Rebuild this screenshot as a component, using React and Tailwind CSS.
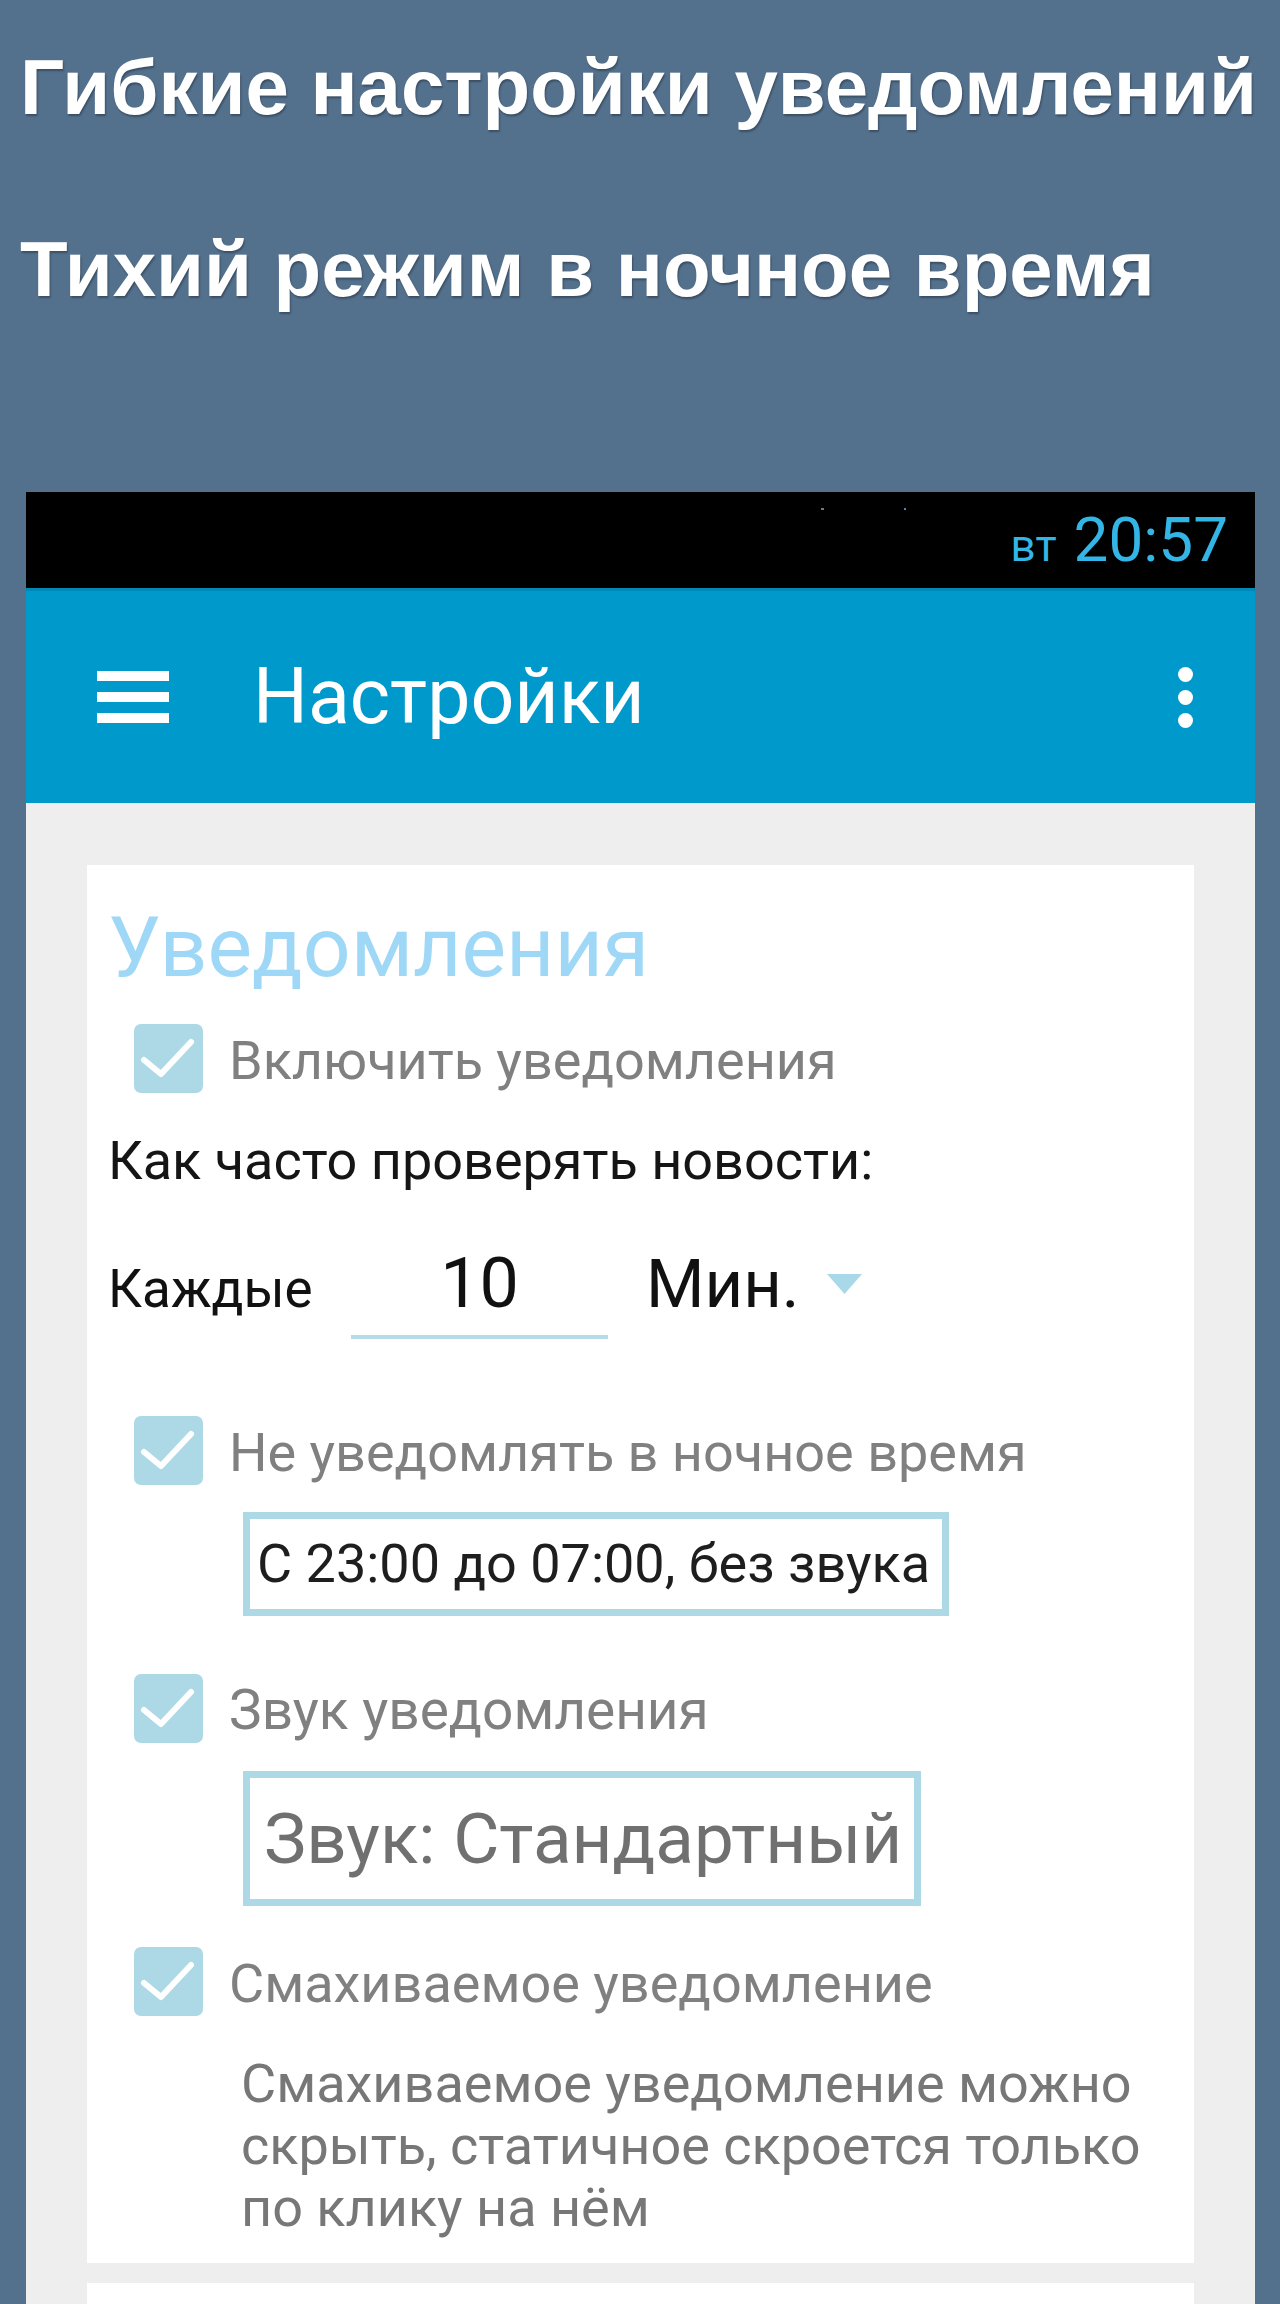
import React from "react";

const Check = () => (
  <div className="w-[69px] h-[69px] rounded-[7px] bg-[#add8e6] shrink-0">
    <svg width="69" height="69" viewBox="0 0 69 69">
      <path d="M10 36 L27 50 L57 18" fill="none" stroke="white" strokeWidth="6" strokeLinecap="round" strokeLinejoin="round" />
    </svg>
  </div>
);

const CheckRow = ({ label, className, textClass = "text-[54px]" }) => (
  <div className={"flex items-center h-[69px] ml-[29px] " + className}>
    <Check />
    <span className={"ml-[26px] pt-[4px] leading-none text-[#808080] whitespace-nowrap " + textClass}>{label}</span>
  </div>
);

export default function App() {
  return (
    <div className="w-[1280px] h-[2304px] bg-[#53708d] overflow-hidden flex flex-col font-['Roboto',sans-serif]">
      <div className="pl-[20px] font-['Liberation_Sans',Arial,sans-serif] font-bold text-white text-[78px] leading-none whitespace-nowrap [text-shadow:1px_2px_2px_rgba(0,0,0,0.3)]">
        <div className="mt-[48px] h-[78px]">Гибкие настройки уведомлений</div>
        <div className="mt-[104px] h-[78px]">Тихий режим в ночное время</div>
      </div>

      <div className="mt-[184px] ml-[26px] w-[1229px] flex-1 flex flex-col bg-[#eeeeee]">
        <div className="relative h-[96px] bg-black flex items-center justify-end pr-[27px] text-[#33b5e5]">
          <span className="absolute left-[795px] top-[16px] w-[3px] h-[2px] bg-[#777]"></span>
          <span className="absolute left-[878px] top-[16px] w-[2px] h-[2px] bg-[#3a8fb5]"></span>
          <div className="flex items-baseline leading-none">
            <span className="text-[44px] mr-[17px]">вт</span>
            <span className="text-[62px]">20:57</span>
          </div>
        </div>

        <div className="h-[215px] bg-[#0099cc] border-t-[3px] border-[#0089b8] flex items-center pl-[71px] pr-[62px]">
          <div className="w-[72px] flex flex-col gap-[11px]">
            <div className="h-[10px] bg-white"></div>
            <div className="h-[10px] bg-white"></div>
            <div className="h-[10px] bg-white"></div>
          </div>
          <div className="ml-[84px] text-white text-[77px] leading-none">Настройки</div>
          <div className="ml-auto flex flex-col gap-[8px]">
            <div className="w-[15px] h-[15px] rounded-full bg-white"></div>
            <div className="w-[15px] h-[15px] rounded-full bg-white"></div>
            <div className="w-[15px] h-[15px] rounded-full bg-white"></div>
          </div>
        </div>

        <div className="px-[61px] pt-[62px] flex flex-col">
          <div className="h-[1398px] bg-white flex flex-col pl-[18px]">
            <div className="mt-[41px] ml-[3px] h-[84px] text-[84px] leading-none text-[#9fd8f7]">Уведомления</div>

            <CheckRow label="Включить уведомления" className="mt-[34px]" />

            <div className="mt-[41px] ml-[3px] h-[54px] text-[54px] leading-none text-[#151515] whitespace-nowrap">Как часто проверять новости:</div>

            <div className="mt-[60px] flex items-baseline leading-none text-[#111]">
              <div className="w-[246px] pl-[3px] text-[53px]">Каждые</div>
              <div className="w-[257px] text-[70px] text-center pb-[17px] border-b-[4px] border-[#b5dce9]">10</div>
              <div className="ml-[38px] flex items-start">
                <span className="text-[67px]">Мин.</span>
                <svg className="ml-[28px] mt-[23px]" width="35" height="20" viewBox="0 0 35 20">
                  <path d="M0 0 L35 0 L17.5 20 Z" fill="#a9d8e8" />
                </svg>
              </div>
            </div>

            <CheckRow label="Не уведомлять в ночное время" className="mt-[77px]" />

            <div className="mt-[27px] ml-[138px] w-[706px] h-[104px] border-[7px] border-[#add8e6] flex items-center pl-[7px] text-[54px] leading-none text-[#1e1e1e] whitespace-nowrap">
              С 23:00 до 07:00, без звука
            </div>

            <CheckRow label="Звук уведомления" className="mt-[58px]" textClass="text-[55px]" />

            <div className="mt-[28px] ml-[138px] w-[678px] h-[135px] border-[7px] border-[#add8e6] flex items-center pl-[14px] text-[71px] leading-none text-[#707070] whitespace-nowrap">
              Звук: Стандартный
            </div>

            <CheckRow label="Смахиваемое уведомление" className="mt-[41px]" />

            <div className="mt-[37px] ml-[136px] text-[54px] leading-[62px] text-[#777777] whitespace-nowrap">
              Смахиваемое уведомление можно
              <br />
              скрыть, статичное скроется только
              <br />
              по клику на нём
            </div>
          </div>
          <div className="mt-[20px] h-[200px] bg-white"></div>
        </div>
      </div>
    </div>
  );
}
